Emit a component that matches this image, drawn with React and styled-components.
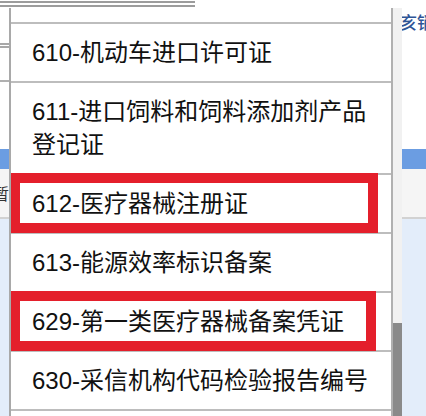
import styled, { createGlobalStyle } from "styled-components";

const GlobalStyle = createGlobalStyle`
  html, body {
    margin: 0;
    padding: 0;
    background: #ffffff;
  }
  body {
    width: 426px;
    height: 416px;
    overflow: hidden;
    font-family: "Liberation Sans", "Noto Sans CJK SC", sans-serif;
  }
`;

const codes = [
  { id: "610", text: "610-机动车进口许可证" },
  { id: "611", text: "611-进口饲料和饲料添加剂产品登记证" },
  { id: "612", text: "612-医疗器械注册证", mark: 368 },
  { id: "613", text: "613-能源效率标识备案" },
  { id: "629", text: "629-第一类医疗器械备案凭证", mark: 366 },
  { id: "630", text: "630-采信机构代码检验报告编号" },
];

const Page = styled.div`
  position: relative;
  width: 426px;
  height: 416px;
  display: flex;
  flex-direction: column;
  overflow: hidden;
`;

const SelectEdge = styled.div`
  width: 195px;
  height: 2px;
  margin-top: 1px;
  border-top: 2px solid #9c9c9c;
  border-bottom: 2px solid #9c9c9c;
  flex-shrink: 0;
`;

const TopSection = styled.div`
  height: 141px;
  margin-top: 1px;
  display: grid;
  grid-template-columns: 1fr 26px;
  flex-shrink: 0;
`;

const LeftPane = styled.div`
  padding-top: 35px;
  display: flex;
  flex-direction: column;
`;

const DoubleRule = styled.div`
  width: 200px;
  height: 1px;
  border-top: 2px solid #a8a8a8;
  border-bottom: 2px solid #a8a8a8;
`;

const Rule = styled.div`
  width: 200px;
  height: 0;
  margin-top: 32px;
  border-top: 2px solid #b0b0b0;
`;

const SidePane = styled.div`
  padding-top: 2px;
  white-space: nowrap;
  overflow: hidden;
  font-size: 17px;
  font-weight: 500;
  line-height: 24px;
  color: #2f5596;
  font-family: "Noto Sans CJK SC", sans-serif;
`;

const HeaderBar = styled.div`
  height: 20px;
  background: #6b9de2;
  flex-shrink: 0;
`;

const StatusRow = styled.div`
  height: 48px;
  background: #f5f5f5;
  border-bottom: 2px solid #d2d2d2;
  display: flex;
  align-items: center;
  flex-shrink: 0;
`;

const StatusCell = styled.div`
  width: 9px;
  display: flex;
  justify-content: flex-end;
  white-space: nowrap;
  font-size: 16px;
  color: #333;
  font-family: "Noto Sans CJK SC", sans-serif;
`;

const TableBody = styled.div`
  flex: 1;
  background: #e3edfa;
`;

/* dropdown list opened over the form */
const Dropdown = styled.div`
  position: absolute;
  top: 8px;
  left: 9px;
  width: 391px;
  bottom: 0;
  display: flex;
  background: #fff;
  border-left: 2px solid #a9a9a9;
  overflow: hidden;
`;

const List = styled.div`
  flex: 1;
  display: flex;
  flex-direction: column;
  border-right: 2px solid #b0b0b0;
`;

const Tail = styled.div`
  height: 14px;
  border-bottom: 2px solid #bdbdbd;
  flex-shrink: 0;
`;

const Option = styled.div`
  position: relative;
  min-height: 56px;
  padding: 12px 10px 12px 21px;
  box-sizing: border-box;
  display: flex;
  align-items: center;
  border-bottom: 2px solid #bdbdbd;
  font-size: 24px;
  line-height: 33px;
  color: #111;
  flex-shrink: 0;
`;

const Highlight = styled.div`
  position: absolute;
  top: -2px;
  bottom: -1px;
  left: -1px;
  width: ${(props) => props.$width}px;
  box-sizing: border-box;
  border: 10px solid #e41f2b;
  pointer-events: none;
`;

const Track = styled.div`
  width: 9px;
  background: #f1f1f1;
  display: flex;
  flex-direction: column;
  justify-content: flex-end;
`;

const Thumb = styled.div`
  height: 93px;
  background: #8a8a8a;
`;

export default function App() {
  return (
    <>
      <GlobalStyle />
      <Page>
        <SelectEdge />
        <TopSection>
          <LeftPane>
            <DoubleRule />
            <Rule />
          </LeftPane>
          <SidePane>亥销</SidePane>
        </TopSection>
        <HeaderBar />
        <StatusRow>
          <StatusCell>暂</StatusCell>
        </StatusRow>
        <TableBody />

        <Dropdown>
          <List>
            <Tail />
            {codes.map((item) => (
              <Option key={item.id}>
                {item.text}
                {item.mark && <Highlight $width={item.mark} />}
              </Option>
            ))}
            <Option />
          </List>
          <Track>
            <Thumb />
          </Track>
        </Dropdown>
      </Page>
    </>
  );
}
